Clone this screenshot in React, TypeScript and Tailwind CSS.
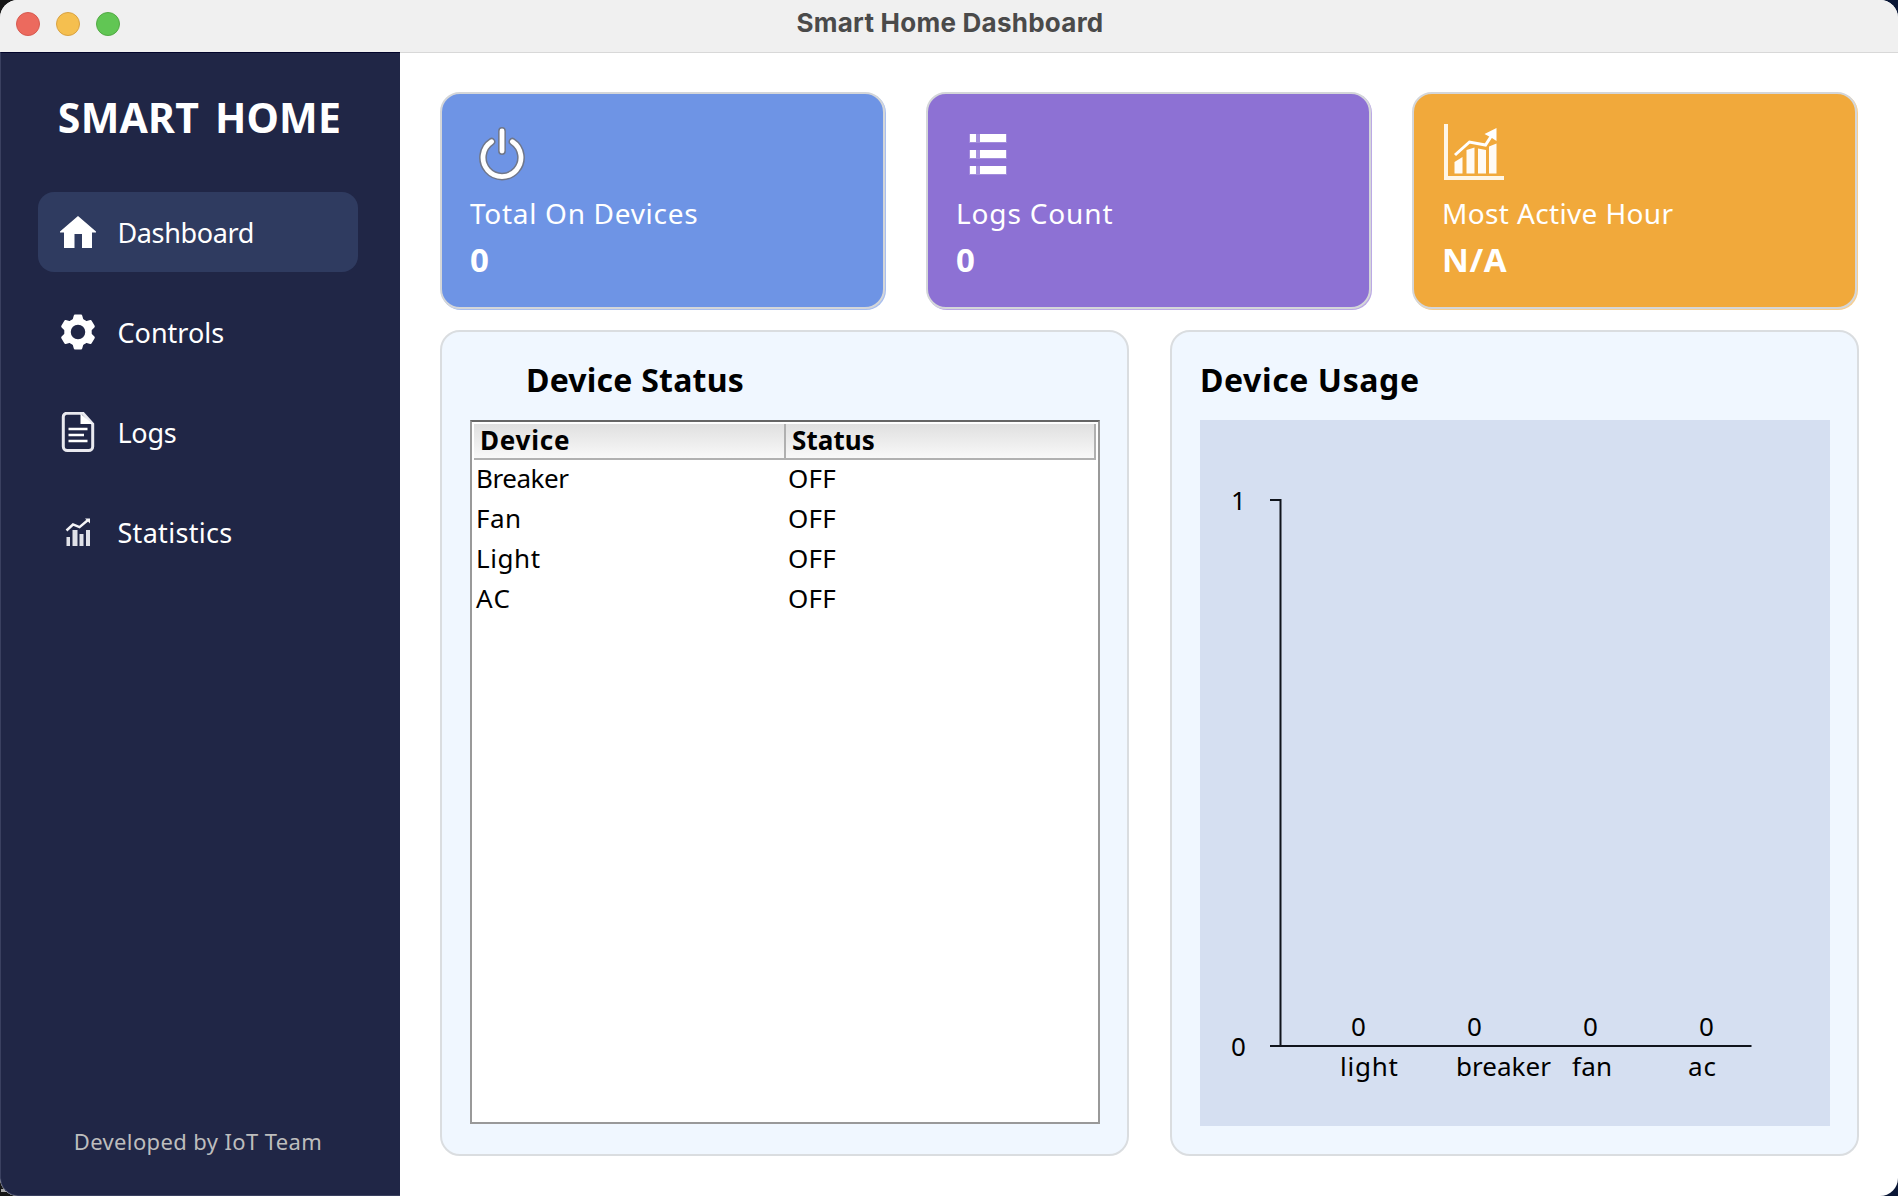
import type { ReactNode } from "react";

const noto = "font-['Noto_Sans',sans-serif]";

function HomeIcon() {
  return (
    <svg width="40" height="40" viewBox="0 0 40 40" fill="#fff">
      <path d="M20 4 38 19.500V20.500H34V36H24V22h-7.500v14H6V20.500H2V19.500Z" />
    </svg>
  );
}

function GearIcon() {
  return (
    <svg width="40" height="40" viewBox="0 0 40 40" fill="none">
      <circle cx="20" cy="20" r="10.5" stroke="#fff" strokeWidth="6.5" />
      {[0, 60, 120].map((a) => (
        <g key={a} transform={`rotate(${a} 20 20)`} fill="#fff">
          <path d="M17 2.500h6q1 0 1.200 1l2 7h-12.400l2-7q.2-1 1.200-1Z" />
          <path d="M17 37.500h6q1 0 1.200-1l2-7h-12.400l2 7q.2 1 1.200 1Z" />
        </g>
      ))}
    </svg>
  );
}

function FileIcon() {
  return (
    <svg width="40" height="40" viewBox="0 0 40 40" fill="none">
      <path
        d="M8.800 1.300H25L34.700 12V34.500a4 4 0 0 1-4 4H9.300a4 4 0 0 1-4-4V4.800a3.500 3.500 0 0 1 3.500-3.500Z"
        stroke="#e9e9ef"
        strokeWidth="3"
      />
      <path d="M22.500 1.500 34.500 12H22.500Z" fill="#fff" />
      <path d="M10.500 17h19M10.500 23h15.500M10.500 29h19" stroke="#fff" strokeWidth="2.600" />
    </svg>
  );
}

function StatsIcon() {
  return (
    <svg width="40" height="40" viewBox="0 0 40 40" fill="none">
      <path d="M8.500 25h3.500v9H8.500ZM14.500 18h5v16h-5ZM21.500 22h4v12h-4ZM28 18h4v16h-4Z" fill="#e0e1e8" />
      <path d="M8.500 18.500 15 12.500 21.500 15.200 30 8" stroke="#f4f4f7" strokeWidth="2.400" />
      <path d="M27 6.500h5v5Z" fill="#f4f4f7" />
    </svg>
  );
}

function PowerIcon() {
  const d = "M21.500 17.700a19 19 0 1 0 21 0M32 7V27";
  return (
    <svg width="64" height="60" viewBox="0 0 64 60" fill="none" strokeLinecap="round">
      <path d={d} stroke="#70778a" strokeWidth="7.800" />
      <path d={d} stroke="#fff" strokeWidth="4.800" />
    </svg>
  );
}

function ListIcon() {
  return (
    <svg width="64" height="60" viewBox="0 0 64 60" fill="#fff">
      {[10, 26, 42].map((y) => (
        <g key={y}>
          <rect x="14" y={y} width="6" height="8" />
          <rect x="24" y={y} width="26" height="8" />
          <rect x="13" y={y} width="38" height="9" opacity=".2" />
        </g>
      ))}
    </svg>
  );
}

function GrowthIcon() {
  return (
    <svg width="64" height="60" viewBox="0 0 64 60" fill="none">
      <path d="M2 0h4v52h56v4H2Z" fill="#fff6e6" />
      <path d="M12.500 38l8-5v16.500h-8ZM24.500 26l8-2.500v26h-8ZM36 24.500l8 1.500v23.500h-8ZM47 22.500l7.500-3v30h-7.500Z" fill="#fff" opacity=".95" />
      <path d="M13 31 27.500 18 43.500 21 50 11" stroke="#fff" strokeWidth="3" />
      <path d="M54.500 4v13L50 14l-7.500-4Z" fill="#fff" />
    </svg>
  );
}

function NavItem({ icon, label, active, spacing }: { icon: ReactNode; label: string; active?: boolean; spacing: string }) {
  return (
    <div className={`flex h-20 items-center rounded-2xl pl-5 ${active ? "bg-[#2f3b60]" : ""}`}>
      {icon}
      <span className={`ml-[19.500px] mt-px text-[27px] leading-10 text-white ${spacing}`}>{label}</span>
    </div>
  );
}

function StatCard({ icon, label, value, color, spacing }: { icon: ReactNode; label: string; value: string; color: string; spacing: string }) {
  return (
    <div className={`mr-px h-[217px] rounded-[20px] border-2 border-[#d4d6d9] pl-7 pt-[30px] text-white ${color}`}>
      <div className="h-[60px]">{icon}</div>
      <div className={`mt-[9px] h-10 text-[28px] leading-10 ${spacing}`}>{label}</div>
      <div className="mt-[3px] h-12 text-[33px] font-bold leading-[48px] tracking-[0.600px]">{value}</div>
    </div>
  );
}

const devices = [
  { name: "Breaker", spacing: "tracking-[-0.450px]" },
  { name: "Fan", spacing: "tracking-[0.500px]" },
  { name: "Light", spacing: "tracking-[0.600px]" },
  { name: "AC", spacing: "tracking-[1.500px]" },
];

const usage = [
  { name: "light", x: 140, w: 56 },
  { name: "breaker", x: 256, w: 93 },
  { name: "fan", x: 372, w: 38 },
  { name: "ac", x: 488, w: 26 },
];

function UsageChart() {
  return (
    <svg width="630" height="706" viewBox="0 0 630 706" className="bg-[#d5dff1]" fontSize="26" fill="#000">
      <path d="M70 80H80.500V627M70 626H551.500" fill="none" stroke="#10141c" strokeWidth="2" />
      <text x="31" y="90">1</text>
      <text x="31" y="636">0</text>
      {usage.map((u, i) => (
        <g key={u.name}>
          <text x={151 + i * 116} y="616">0</text>
          <text x={u.x} y="656" textLength={u.w + 2}>{u.name}</text>
        </g>
      ))}
    </svg>
  );
}

export default function App() {
  return (
    <div className={`relative h-[1196px] w-[1898px] overflow-hidden bg-[linear-gradient(90deg,#161616_50%,#0a1736_50%)] ${noto}`}>
      <div className="absolute bottom-1 left-px h-[3px] w-4 bg-[#a8a8a8]" />
      <div className="relative flex h-full flex-col overflow-hidden rounded-[18px] bg-white">
        <header className="relative flex h-[52px] shrink-0 items-start justify-center bg-[#f0f0f0]">
          <div className="absolute left-4 top-3 flex gap-4">
            <span className="size-6 rounded-full border border-[#d65a50] bg-[#ec6a5e]" />
            <span className="size-6 rounded-full border border-[#d8a243] bg-[#f5bf4f]" />
            <span className="size-6 rounded-full border border-[#53a945] bg-[#61c654]" />
          </div>
          <h1 className="pl-0.5 pt-[2px] font-['Inter',sans-serif] text-[26px] font-bold leading-[42px] tracking-[0.250px] text-[#4a4a4a]">Smart Home Dashboard</h1>
        </header>
        <div className="flex min-h-0 flex-1">
          <aside className="flex w-[400px] shrink-0 flex-col rounded-bl-[18px] border-b border-l border-t border-b-[#3a4060] border-l-[#3a4060] border-t-[#02042b] bg-[#202646] pl-[37px] pr-[42px]">
            <div className="mt-[34px] flex h-[60px] justify-center whitespace-nowrap pl-[3px] text-[41px] font-bold leading-[60px] tracking-[0.200px] text-white [word-spacing:5px]">SMART HOME</div>
            <nav className="mt-[45px] flex flex-col gap-5">
              <NavItem active icon={<HomeIcon />} label="Dashboard" spacing="tracking-[-0.380px]" />
              <NavItem icon={<GearIcon />} label="Controls" spacing="" />
              <NavItem icon={<FileIcon />} label="Logs" spacing="tracking-[-0.300px]" />
              <NavItem icon={<StatsIcon />} label="Statistics" spacing="tracking-[0.300px]" />
            </nav>
            <div className="mb-[38px] mt-auto text-center text-[22px] leading-8 tracking-[0.380px] text-[#bdbdbd]">Developed by IoT Team</div>
          </aside>
          <main className="flex flex-1 flex-col border-t border-[#d8d8d8] pl-10 pt-[39px]">
            <div className="grid w-[1418px] grid-cols-3 gap-10">
              <StatCard icon={<PowerIcon />} label="Total On Devices" value="0" color="bg-[#6e94e5] shadow-[1px_1px_0_#a9bfef]" spacing="tracking-[0.700px]" />
              <StatCard icon={<ListIcon />} label="Logs Count" value="0" color="bg-[#8d71d4] shadow-[1px_1px_0_#bba9e5]" spacing="tracking-[0.850px]" />
              <StatCard icon={<GrowthIcon />} label="Most Active Hour" value="N/A" color="bg-[#f1a93b] shadow-[1px_1px_0_#f7cf92]" spacing="tracking-[0.360px]" />
            </div>
            <div className="mt-[21px] flex gap-[41px]">
              <section className="h-[826px] w-[689px] rounded-[20px] border-2 border-[#dadde0] bg-[#f0f7ff] pl-7">
                <h2 className="ml-[56px] mt-[24px] h-12 text-[32px] font-bold leading-[48px] tracking-[0.220px]">Device Status</h2>
                <div className="mt-[16px] h-[704px] w-[630px] border-2 border-[#999] border-t-[#666] bg-white px-[2px] pt-[2px]">
                  <div className="flex h-9 border-b-2 border-[#b0b0b0] bg-linear-to-b from-[#e0e0e0] to-[#f8f8f8] text-[26px] font-bold leading-8">
                    <div className="w-[312px] border-r-2 border-[#b0b0b0] pl-[6px] tracking-[0.790px]">Device</div>
                    <div className="flex-1 border-r-2 border-[#b0b0b0] pl-[6px] tracking-[0.100px]">Status</div>
                  </div>
                  {devices.map((d) => (
                    <div key={d.name} className="flex h-10 pl-[2px] text-[26px] leading-[37px]">
                      <div className={`w-[312px] ${d.spacing}`}>{d.name}</div>
                      <div className="tracking-[0.200px]">OFF</div>
                    </div>
                  ))}
                </div>
              </section>
              <section className="h-[826px] w-[689px] rounded-[20px] border-2 border-[#dadde0] bg-[#f0f7ff] pl-7">
                <h2 className="mt-[24px] h-12 text-[32px] font-bold leading-[48px] tracking-[0.600px]">Device Usage</h2>
                <div className="mt-[16px]">
                  <UsageChart />
                </div>
              </section>
            </div>
          </main>
        </div>
      </div>
    </div>
  );
}
